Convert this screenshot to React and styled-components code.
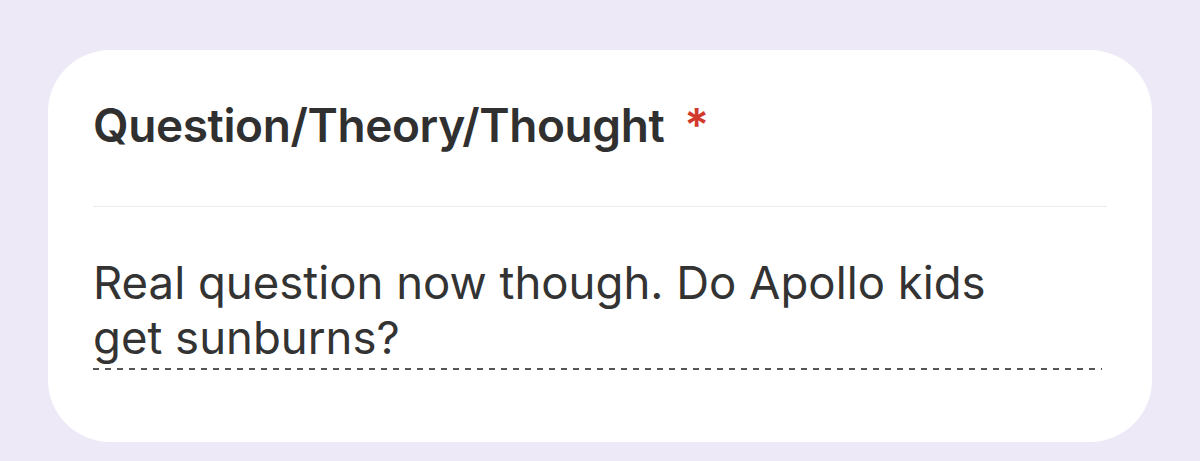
import React from 'react';
import styled, { createGlobalStyle } from 'styled-components';

const GlobalStyle = createGlobalStyle`
    html, body {
        margin: 0;
        padding: 0;
        background: #ede9f6;
    }
    body {
        font-family: Inter, "Noto Sans", sans-serif;
        -webkit-font-smoothing: antialiased;
    }
`;

const Page = styled.div`
    width: 1200px;
    height: 461px;
    box-sizing: border-box;
    padding: 50px 48px 19px 48px;
    background: #ede9f6;
`;

const Card = styled.div`
    height: 392px;
    box-sizing: border-box;
    background: #fff;
    border-radius: 62px;
    padding: 0 45px;
    display: flex;
    flex-direction: column;
`;

const Header = styled.div`
    height: 157px;
    padding-bottom: 7px;
    display: flex;
    align-items: center;
    border-bottom: 1.5px solid #ececec;
    box-sizing: border-box;
`;

const Title = styled.h2`
    margin: 0;
    font-size: 46px;
    font-weight: 600;
    color: #303030;
    letter-spacing: -0.4px;
`;

const Required = styled.span`
    color: #d0392b;
    margin-left: 20px;
    font-weight: 600;
`;

const Answer = styled.div`
    margin-top: 48px;
    margin-right: 5px;
    padding-bottom: 5px;
    font-size: 45.5px;
    line-height: 55px;
    font-weight: 400;
    color: #333;
    background-image: linear-gradient(to right, #555 0 6px, transparent 6px 12px);
    background-size: 12px 2px;
    background-repeat: repeat-x;
    background-position: left bottom;
`;

export default function App() {
    return (
        <>
            <GlobalStyle />
            <Page>
                <Card>
                    <Header>
                        <Title>
                            Question/Theory/Thought<Required>*</Required>
                        </Title>
                    </Header>
                    <Answer>
                        Real question now though. Do Apollo kids
                        <br />
                        get sunburns?
                    </Answer>
                </Card>
            </Page>
        </>
    );
}
